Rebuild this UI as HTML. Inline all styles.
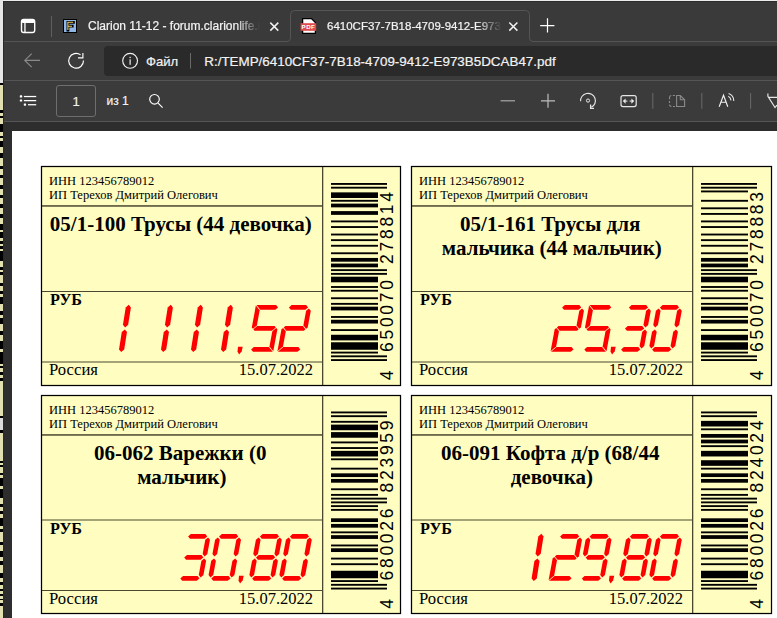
<!DOCTYPE html>
<html><head><meta charset="utf-8"><style>
*{margin:0;padding:0;box-sizing:border-box}
html,body{width:777px;height:618px;overflow:hidden;background:#2d2d2d;position:relative;font-family:"Liberation Sans",sans-serif}
.abs{position:absolute}
.lab{position:absolute;background:#fffec0}
.ov{position:absolute;overflow:visible}
.t{position:absolute;font-family:"Liberation Serif",serif;color:#000;white-space:nowrap}
.inn,.ip{font-size:12.5px;line-height:14px}
.ttl{font-size:21px;font-weight:bold;text-align:center;line-height:24px}
.rub{font-size:16.2px;font-weight:bold;line-height:18px}
.ru{font-size:16.7px;line-height:18px}
.dt{font-size:16.5px;line-height:18px;text-align:right}
.ui{position:absolute;color:#fff;white-space:nowrap;font-family:"Liberation Sans",sans-serif;-webkit-text-stroke:0.2px currentColor}
</style></head><body>
<!-- left strip -->
<div class="abs" style="left:0;top:0;width:777px;height:1px;background:#ececec"></div><div class="abs" style="left:0;top:0;width:3px;height:83px;background:#e6e6e6"></div>
<div class="abs" style="left:0;top:83px;width:3px;height:535px;background:#e2e0b0"></div>
<div style="position:absolute;left:0;top:83px;width:3px;height:2px;background:#000"></div><div style="position:absolute;left:0;top:110px;width:3px;height:3px;background:#000"></div><div style="position:absolute;left:0;top:116px;width:3px;height:2px;background:#000"></div><div style="position:absolute;left:0;top:124px;width:3px;height:8px;background:#000"></div><div style="position:absolute;left:0;top:136px;width:3px;height:2px;background:#000"></div><div style="position:absolute;left:0;top:141px;width:3px;height:6px;background:#000"></div><div style="position:absolute;left:0;top:153px;width:3px;height:5px;background:#000"></div><div style="position:absolute;left:0;top:166px;width:3px;height:3px;background:#000"></div><div style="position:absolute;left:0;top:175px;width:3px;height:3px;background:#000"></div><div style="position:absolute;left:0;top:185px;width:3px;height:4px;background:#000"></div><div style="position:absolute;left:0;top:195px;width:3px;height:3px;background:#000"></div><div style="position:absolute;left:0;top:204px;width:3px;height:4px;background:#000"></div><div style="position:absolute;left:0;top:214px;width:3px;height:4px;background:#000"></div><div style="position:absolute;left:0;top:224px;width:3px;height:6px;background:#000"></div><div style="position:absolute;left:0;top:232px;width:3px;height:6px;background:#000"></div><div style="position:absolute;left:0;top:241px;width:3px;height:3px;background:#000"></div><div style="position:absolute;left:0;top:246px;width:3px;height:3px;background:#000"></div><div style="position:absolute;left:0;top:251px;width:3px;height:10px;background:#000"></div><div style="position:absolute;left:0;top:267px;width:3px;height:3px;background:#000"></div><div style="position:absolute;left:0;top:272px;width:3px;height:3px;background:#000"></div><div style="position:absolute;left:0;top:283px;width:3px;height:3px;background:#000"></div><div style="position:absolute;left:0;top:291px;width:3px;height:3px;background:#000"></div><div style="position:absolute;left:0;top:297px;width:3px;height:7px;background:#000"></div><div style="position:absolute;left:0;top:311px;width:3px;height:4px;background:#000"></div><div style="position:absolute;left:0;top:318px;width:3px;height:6px;background:#000"></div><div style="position:absolute;left:0;top:331px;width:3px;height:4px;background:#000"></div><div style="position:absolute;left:0;top:341px;width:3px;height:8px;background:#000"></div><div style="position:absolute;left:0;top:352px;width:3px;height:12px;background:#000"></div><div style="position:absolute;left:0;top:366px;width:3px;height:2px;background:#000"></div><div style="position:absolute;left:0;top:372px;width:3px;height:3px;background:#000"></div><div style="position:absolute;left:0;top:378px;width:3px;height:3px;background:#000"></div><div style="position:absolute;left:0;top:416px;width:3px;height:2px;background:#000"></div><div style="position:absolute;left:0;top:430px;width:3px;height:3px;background:#000"></div><div style="position:absolute;left:0;top:461px;width:3px;height:2px;background:#000"></div><div style="position:absolute;left:0;top:465px;width:3px;height:2px;background:#000"></div><div style="position:absolute;left:0;top:473px;width:3px;height:2px;background:#000"></div><div style="position:absolute;left:0;top:478px;width:3px;height:8px;background:#000"></div><div style="position:absolute;left:0;top:489px;width:3px;height:9px;background:#000"></div><div style="position:absolute;left:0;top:504px;width:3px;height:3px;background:#000"></div><div style="position:absolute;left:0;top:511px;width:3px;height:3px;background:#000"></div><div style="position:absolute;left:0;top:518px;width:3px;height:8px;background:#000"></div><div style="position:absolute;left:0;top:529px;width:3px;height:3px;background:#000"></div><div style="position:absolute;left:0;top:542px;width:3px;height:3px;background:#000"></div><div style="position:absolute;left:0;top:551px;width:3px;height:6px;background:#000"></div><div style="position:absolute;left:0;top:561px;width:3px;height:4px;background:#000"></div><div style="position:absolute;left:0;top:573px;width:3px;height:5px;background:#000"></div><div style="position:absolute;left:0;top:582px;width:3px;height:3px;background:#000"></div><div style="position:absolute;left:0;top:589px;width:3px;height:2px;background:#000"></div><div style="position:absolute;left:0;top:594px;width:3px;height:2px;background:#000"></div><div style="position:absolute;left:0;top:599px;width:3px;height:1px;background:#000"></div><div style="position:absolute;left:0;top:603px;width:3px;height:3px;background:#000"></div><div style="position:absolute;left:0;top:418px;width:3px;height:12px;background:#dcdcdc"></div>
<!-- tab strip -->
<div class="abs" style="left:3px;top:1px;width:774px;height:41px;background:#3a3a3a;border-left:1px solid #2c2c2c;border-top:1px solid #2c2c2c"></div>
<svg class="abs" style="left:0;top:0" width="777" height="45"><path d="M4 41.5 H287 Q290.5 41.5 290.5 38 V14.5 Q290.5 10.5 294.5 10.5 H525.5 Q529.5 10.5 529.5 14.5 V38 Q529.5 41.5 533 41.5 H777" fill="none" stroke="#555555" stroke-width="1"/></svg>
<!-- toolbar -->
<div class="abs" style="left:3px;top:42px;width:774px;height:38px;background:#3b3b3b"></div>
<div class="abs" style="left:3px;top:80px;width:774px;height:1px;background:#555555"></div>
<div class="abs" style="left:104px;top:46px;width:690px;height:29.6px;background:#2a2a2a;border-radius:4px"></div>
<!-- pdf toolbar -->
<div class="abs" style="left:3px;top:81px;width:774px;height:40px;background:#3b3b3b"></div>
<div class="abs" style="left:3px;top:121px;width:774px;height:1px;background:#555555"></div>

<!-- chrome icons/text -->
<svg class="abs" style="left:0;top:0" width="777" height="130" viewBox="0 0 777 130">
 <!-- tab actions icon -->
 <rect x="21.5" y="19.5" width="13.2" height="13" rx="2.2" fill="none" stroke="#fff" stroke-width="1.4"/>
 <rect x="21.5" y="19.5" width="13.2" height="3.6" rx="1.5" fill="#fff"/>
 <rect x="24.3" y="22.5" width="1.3" height="10" fill="#fff"/>
 <rect x="51" y="16" width="1" height="21" fill="#5f5f5f"/>
 <!-- favicon F -->
 <rect x="63" y="19" width="14" height="14" fill="#000"/>
 <rect x="64" y="20" width="12" height="12" fill="#8fb6e6"/>
 <path d="M67.9 30.2 V22.3 H73.4 M67.9 26.2 H72.2" fill="none" stroke="#000" stroke-width="2.8" stroke-linecap="square"/>
 <path d="M67.9 30 V22.3 H73.2 M67.9 26.2 H72.0" fill="none" stroke="#f5cf55" stroke-width="1.1"/>
 <!-- tab1 close -->
 <path d="M270.3 22.6 L278.3 30.6 M278.3 22.6 L270.3 30.6" stroke="#f0f0f0" stroke-width="1.5"/>
 <!-- pdf icon -->
 <path d="M302.6 18.6 H311.4 L315.4 22.6 V33.4 H302.6 Z" fill="#fff" stroke="#000" stroke-width="1.3"/>
 <rect x="300.6" y="23.2" width="15.6" height="7.6" fill="#e04a4a"/>
 <text x="308.4" y="29.3" font-family="Liberation Sans" font-weight="bold" font-size="6.2" fill="#fff" text-anchor="middle" letter-spacing="0.4">PDF</text>
 <!-- tab2 close -->
 <path d="M509.3 22.5 L517.4 30.6 M517.4 22.5 L509.3 30.6" stroke="#f0f0f0" stroke-width="1.5"/>
 <!-- new tab plus -->
 <path d="M540.2 25.6 H554.4 M547.5 18.2 V32.6" stroke="#fff" stroke-width="1.2"/>
 <!-- back -->
 <path d="M31.7 53.6 L24.8 60.4 L31.7 67.1 M24.8 60.4 H40" fill="none" stroke="#8a8a8a" stroke-width="1.15"/>
 <!-- refresh -->
 <path d="M83.5 60.6 A7.4 7.4 0 1 1 80.6 54.9" fill="none" stroke="#fff" stroke-width="1.15"/>
 <path d="M82.9 53 V57.8 H78" fill="none" stroke="#fff" stroke-width="1.15"/>
 <!-- info -->
 <circle cx="130.1" cy="60.8" r="7.4" fill="none" stroke="#f0f0f0" stroke-width="1.15"/>
 <rect x="129.4" y="56.8" width="1.5" height="1.3" fill="#d0d0d0"/>
 <rect x="129.4" y="59.3" width="1.5" height="5.5" fill="#c8c8c8"/>
 <rect x="190" y="53" width="1" height="15.5" fill="#6a6a6a"/>
 <!-- list icon -->
 <rect x="19.8" y="95.3" width="2.4" height="2.2" rx="0.6" fill="#fff"/>
 <rect x="19.8" y="99.4" width="2.4" height="2.2" rx="0.6" fill="#fff"/>
 <rect x="23.8" y="103.5" width="2.3" height="2.2" rx="0.6" fill="#fff"/>
 <rect x="23.9" y="95.9" width="12.3" height="1.25" fill="#fff"/>
 <rect x="23.9" y="100" width="12.3" height="1.25" fill="#fff"/>
 <rect x="28" y="104.1" width="8.2" height="1.25" fill="#fff"/>
 <!-- page box -->
 <rect x="56.5" y="85.5" width="39" height="31" rx="2.5" fill="none" stroke="#6e6e6e" stroke-width="1"/>
 <!-- search -->
 <circle cx="154.5" cy="99.3" r="4.8" fill="none" stroke="#fff" stroke-width="1.15"/>
 <path d="M158.1 103.2 L162.6 107.6" stroke="#fff" stroke-width="1.15"/>
 <!-- minus / plus -->
 <path d="M500.6 100.8 H515" stroke="#a9a9a9" stroke-width="1.2"/>
 <path d="M541 100.8 H555 M548 93.7 V107.8" stroke="#bdbdbd" stroke-width="1.2"/>
 <!-- rotate -->
 <path d="M580.6 101.2 A7.4 7.4 0 1 1 591.4 107.3" fill="none" stroke="#e6e6e6" stroke-width="1.15"/>
 <path d="M590.6 104.6 V108.3 H594" fill="none" stroke="#e6e6e6" stroke-width="1.3"/>
 <circle cx="588" cy="100.6" r="1.6" fill="none" stroke="#e6e6e6" stroke-width="1"/>
 <!-- fit width -->
 <rect x="621" y="95.6" width="15.2" height="11" rx="2" fill="none" stroke="#e6e6e6" stroke-width="1.2"/>
 <path d="M622.8 101.1 L625.6 98.4 V103.8 Z M634.2 101.1 L631.4 98.4 V103.8 Z" fill="#eeeeee"/>
 <path d="M625 101.1 H627.4 M629.6 101.1 H632" stroke="#cfcfcf" stroke-width="1.3"/>
 <rect x="652.3" y="93" width="1" height="15.8" fill="#6a6a6a"/>
 <!-- two page -->
 <path d="M675 95.5 H672.8 M671.3 95.5 H671.2 A2 2 0 0 0 669.5 97.5 V99.2 M669.5 101 V103 M669.5 104.6 A2 2 0 0 0 671.5 106.5 M673 106.5 H675" fill="none" stroke="#8a8a8a" stroke-width="1.1"/>
 <path d="M676.6 95.5 H680.3 L684.6 99.8 V106.5 H676.6 Z M680.3 95.5 V99.8 H684.6" fill="none" stroke="#8a8a8a" stroke-width="1.1"/>
 <rect x="701.3" y="93" width="1" height="15.8" fill="#6a6a6a"/>
 <!-- read aloud -->
 <path d="M719.2 106.8 L723.5 95.2 L727.8 106.8 M720.6 102.2 H726.4" fill="none" stroke="#f0f0f0" stroke-width="1.15"/>
 <path d="M728.3 96.2 A5 5 0 0 1 731 100.4 M728.6 93.6 A8 8 0 0 1 733.8 101" fill="none" stroke="#e8e8e8" stroke-width="1.1"/>
 <rect x="750.1" y="93" width="1" height="15.8" fill="#6a6a6a"/>
 <!-- draw -->
 <path d="M767.9 93.4 V96.4 L775 107.6 L777 105 M768.5 97.4 H777" fill="none" stroke="#e8e8e8" stroke-width="1.15"/>
</svg>
<div class="ui" style="left:88px;top:19px;font-size:12px;line-height:14px;color:#f4f4f4;width:172px;overflow:hidden;-webkit-mask-image:linear-gradient(90deg,#000 86%,transparent 100%)">Clarion 11-12 - forum.clarionlife.ru</div>
<div class="ui" style="left:327px;top:19px;font-size:11.5px;line-height:14px;color:#f4f4f4;width:175px;overflow:hidden;-webkit-mask-image:linear-gradient(90deg,#000 86%,transparent 100%)">6410CF37-7B18-4709-9412-E973B5DCAB47.pdf</div>
<div class="ui" style="left:146px;top:53.5px;font-size:13.1px;line-height:15px;color:#f2f2f2">Файл</div>
<div class="ui" style="left:204.3px;top:53.5px;font-size:13.4px;line-height:15px;color:#f2f2f2">R:/TEMP/6410CF37-7B18-4709-9412-E973B5DCAB47.pdf</div>
<div class="ui" style="left:56px;top:93.5px;width:40px;text-align:center;font-size:13px;line-height:15px;color:#f2f2f2">1</div>
<div class="ui" style="left:106.5px;top:93.5px;font-size:12px;line-height:15px;color:#f2f2f2">из 1</div>

<div class="abs" style="left:3px;top:1px;width:1px;height:617px;background:#2a2a2a"></div>
<!-- page -->
<div class="abs" style="left:12px;top:131px;width:800px;height:500px;background:#fff"></div>
<div class="lab" style="left:41px;top:166px;width:360px;height:220px"></div>
<svg class="ov" style="left:41px;top:166px" width="360" height="220" viewBox="0 0 360 220">
<rect x="0.5" y="0.5" width="359" height="219" fill="none" stroke="#000" stroke-width="1.25"/>
<rect x="281" y="1" width="1.3" height="218" fill="#4a4830"/>
<rect x="1" y="39.2" width="280" height="1.5" fill="#4a4830"/>
<rect x="1" y="125" width="280" height="1" fill="#4a4830"/>
<rect x="1" y="195.5" width="280" height="1" fill="#4a4830"/>
<g fill="#000"><rect x="290" y="193.126" width="56" height="1.874"/>
<rect x="290" y="189.379" width="56" height="1.874"/>
<rect x="290" y="185.631" width="47" height="1.874"/>
<rect x="290" y="176.263" width="47" height="7.495"/>
<rect x="290" y="168.768" width="47" height="5.621"/>
<rect x="290" y="163.147" width="47" height="1.874"/>
<rect x="290" y="153.779" width="47" height="3.747"/>
<rect x="290" y="150.031" width="47" height="1.874"/>
<rect x="290" y="140.663" width="47" height="3.747"/>
<rect x="290" y="136.915" width="47" height="1.874"/>
<rect x="290" y="131.294" width="47" height="1.874"/>
<rect x="290" y="123.799" width="47" height="1.874"/>
<rect x="290" y="120.052" width="47" height="1.874"/>
<rect x="290" y="110.684" width="47" height="5.621"/>
<rect x="290" y="106.936" width="56" height="1.874"/>
<rect x="290" y="103.189" width="56" height="1.874"/>
<rect x="290" y="97.568" width="47" height="3.747"/>
<rect x="290" y="91.947" width="47" height="3.747"/>
<rect x="290" y="86.325" width="47" height="1.874"/>
<rect x="290" y="78.831" width="47" height="1.874"/>
<rect x="290" y="73.210" width="47" height="1.874"/>
<rect x="290" y="67.588" width="47" height="1.874"/>
<rect x="290" y="60.094" width="47" height="1.874"/>
<rect x="290" y="54.472" width="47" height="1.874"/>
<rect x="290" y="45.104" width="47" height="3.747"/>
<rect x="290" y="37.609" width="47" height="3.747"/>
<rect x="290" y="33.862" width="47" height="1.874"/>
<rect x="290" y="26.367" width="47" height="5.621"/>
<rect x="290" y="20.746" width="56" height="1.874"/>
<rect x="290" y="16.999" width="56" height="1.874"/></g>
<g fill="#000" stroke="#fffec0" stroke-width="0" font-family="Liberation Sans" font-size="17.5" text-anchor="middle"><text transform="translate(352,209.50) rotate(-90)" x="0" y="0">4</text>
<text transform="translate(352,181.16) rotate(-90)" x="0" y="0">6</text>
<text transform="translate(352,168.71) rotate(-90)" x="0" y="0">5</text>
<text transform="translate(352,156.26) rotate(-90)" x="0" y="0">0</text>
<text transform="translate(352,143.81) rotate(-90)" x="0" y="0">0</text>
<text transform="translate(352,131.36) rotate(-90)" x="0" y="0">7</text>
<text transform="translate(352,118.91) rotate(-90)" x="0" y="0">0</text>
<text transform="translate(352,93.09) rotate(-90)" x="0" y="0">2</text>
<text transform="translate(352,80.64) rotate(-90)" x="0" y="0">7</text>
<text transform="translate(352,68.19) rotate(-90)" x="0" y="0">8</text>
<text transform="translate(352,55.74) rotate(-90)" x="0" y="0">8</text>
<text transform="translate(352,43.29) rotate(-90)" x="0" y="0">1</text>
<text transform="translate(352,30.84) rotate(-90)" x="0" y="0">4</text></g>
<g fill="#ff0000"><polygon points="247.87,141.40 250.65,139.05 265.15,139.05 267.07,141.40 264.29,143.75 249.79,143.75"/>
<polygon points="265.10,144.75 267.88,142.40 269.80,144.75 266.71,161.45 265.05,162.85 262.36,159.55"/>
<polygon points="242.71,161.45 244.37,160.05 261.77,160.05 264.46,163.35 262.80,164.75 245.40,164.75"/>
<polygon points="240.46,163.35 242.12,161.95 244.81,165.25 241.98,180.55 236.41,185.25 236.41,185.25"/>
<polygon points="242.38,181.05 257.38,181.05 259.30,183.40 256.52,185.75 236.82,185.75 236.82,185.75"/>
<polygon points="215.45,139.05 215.45,139.05 235.15,139.05 237.07,141.40 234.29,143.75 219.29,143.75"/>
<polygon points="214.86,139.55 214.86,139.55 218.69,144.25 215.86,159.55 211.95,162.85 210.81,161.45"/>
<polygon points="216.27,160.05 233.67,160.05 234.81,161.45 230.90,164.75 213.50,164.75 212.36,163.35"/>
<polygon points="231.31,165.25 235.22,161.95 236.36,163.35 232.31,185.25 232.31,185.25 228.48,180.55"/>
<polygon points="210.10,183.40 212.88,181.05 227.88,181.05 231.72,185.75 231.72,185.75 212.02,185.75"/>
<polygon points="186.72,141.40 189.74,138.80 191.92,141.40 189.14,158.80 186.12,161.40 183.94,158.80"/>
<polygon points="182.78,166.00 185.80,163.40 187.98,166.00 185.20,183.40 182.18,186.00 180.00,183.40"/>
<polygon points="156.72,141.40 159.74,138.80 161.92,141.40 159.14,158.80 156.12,161.40 153.94,158.80"/>
<polygon points="152.78,166.00 155.80,163.40 157.98,166.00 155.20,183.40 152.18,186.00 150.00,183.40"/>
<polygon points="126.72,141.40 129.74,138.80 131.92,141.40 129.14,158.80 126.12,161.40 123.94,158.80"/>
<polygon points="122.78,166.00 125.80,163.40 127.98,166.00 125.20,183.40 122.18,186.00 120.00,183.40"/>
<polygon points="84.72,141.40 87.74,138.80 89.92,141.40 87.14,158.80 84.12,161.40 81.94,158.80"/>
<polygon points="80.78,166.00 83.80,163.40 85.98,166.00 83.20,183.40 80.18,186.00 78.00,183.40"/>
<polygon points="197.00,180.70 201.70,180.70 200.70,185.20 198.10,188.40 196.50,185.40"/></g>
</svg>
<div class="t inn" style="left:49px;top:174px">ИНН 123456789012</div>
<div class="t ip" style="left:49px;top:188px">ИП Терехов Дмитрий Олегович</div>
<div class="t ttl" style="left:40.8px;top:211.7px;width:280px">05/1-100 Трусы (44 девочка)</div>
<div class="t rub" style="left:50px;top:291px">РУБ</div>
<div class="t ru" style="left:49px;top:361.2px">Россия</div>
<div class="t dt" style="left:172px;top:361.2px;width:141px">15.07.2022</div><div class="lab" style="left:411px;top:166px;width:361px;height:220px"></div>
<svg class="ov" style="left:411px;top:166px" width="361" height="220" viewBox="0 0 361 220">
<rect x="0.5" y="0.5" width="360" height="219" fill="none" stroke="#000" stroke-width="1.25"/>
<rect x="281" y="1" width="1.3" height="218" fill="#4a4830"/>
<rect x="1" y="39.2" width="280" height="1.5" fill="#4a4830"/>
<rect x="1" y="125" width="280" height="1" fill="#4a4830"/>
<rect x="1" y="195.5" width="280" height="1" fill="#4a4830"/>
<g fill="#000"><rect x="290" y="193.126" width="56" height="1.874"/>
<rect x="290" y="189.379" width="56" height="1.874"/>
<rect x="290" y="185.631" width="47" height="1.874"/>
<rect x="290" y="176.263" width="47" height="7.495"/>
<rect x="290" y="168.768" width="47" height="5.621"/>
<rect x="290" y="163.147" width="47" height="1.874"/>
<rect x="290" y="153.779" width="47" height="3.747"/>
<rect x="290" y="150.031" width="47" height="1.874"/>
<rect x="290" y="140.663" width="47" height="3.747"/>
<rect x="290" y="136.915" width="47" height="1.874"/>
<rect x="290" y="131.294" width="47" height="1.874"/>
<rect x="290" y="123.799" width="47" height="1.874"/>
<rect x="290" y="120.052" width="47" height="1.874"/>
<rect x="290" y="110.684" width="47" height="5.621"/>
<rect x="290" y="106.936" width="56" height="1.874"/>
<rect x="290" y="103.189" width="56" height="1.874"/>
<rect x="290" y="97.568" width="47" height="3.747"/>
<rect x="290" y="91.947" width="47" height="3.747"/>
<rect x="290" y="86.325" width="47" height="1.874"/>
<rect x="290" y="78.831" width="47" height="1.874"/>
<rect x="290" y="73.210" width="47" height="1.874"/>
<rect x="290" y="67.588" width="47" height="1.874"/>
<rect x="290" y="60.094" width="47" height="1.874"/>
<rect x="290" y="54.472" width="47" height="1.874"/>
<rect x="290" y="46.978" width="47" height="1.874"/>
<rect x="290" y="41.357" width="47" height="1.874"/>
<rect x="290" y="33.862" width="47" height="1.874"/>
<rect x="290" y="24.493" width="47" height="1.874"/>
<rect x="290" y="20.746" width="56" height="1.874"/>
<rect x="290" y="16.999" width="56" height="1.874"/></g>
<g fill="#000" stroke="#fffec0" stroke-width="0" font-family="Liberation Sans" font-size="17.5" text-anchor="middle"><text transform="translate(352,209.50) rotate(-90)" x="0" y="0">4</text>
<text transform="translate(352,181.16) rotate(-90)" x="0" y="0">6</text>
<text transform="translate(352,168.71) rotate(-90)" x="0" y="0">5</text>
<text transform="translate(352,156.26) rotate(-90)" x="0" y="0">0</text>
<text transform="translate(352,143.81) rotate(-90)" x="0" y="0">0</text>
<text transform="translate(352,131.36) rotate(-90)" x="0" y="0">7</text>
<text transform="translate(352,118.91) rotate(-90)" x="0" y="0">0</text>
<text transform="translate(352,93.09) rotate(-90)" x="0" y="0">2</text>
<text transform="translate(352,80.64) rotate(-90)" x="0" y="0">7</text>
<text transform="translate(352,68.19) rotate(-90)" x="0" y="0">8</text>
<text transform="translate(352,55.74) rotate(-90)" x="0" y="0">8</text>
<text transform="translate(352,43.29) rotate(-90)" x="0" y="0">8</text>
<text transform="translate(352,30.84) rotate(-90)" x="0" y="0">3</text></g>
<g fill="#ff0000"><polygon points="248.87,141.40 251.65,139.05 266.15,139.05 268.07,141.40 265.29,143.75 250.79,143.75"/>
<polygon points="266.10,144.75 268.88,142.40 270.80,144.75 268.15,159.05 265.37,161.40 263.45,159.05"/>
<polygon points="262.22,165.75 265.00,163.40 266.92,165.75 264.27,180.05 261.49,182.40 259.57,180.05"/>
<polygon points="241.10,183.40 243.88,181.05 258.38,181.05 260.30,183.40 257.52,185.75 243.02,185.75"/>
<polygon points="241.02,165.75 243.80,163.40 245.72,165.75 243.07,180.05 240.28,182.40 238.37,180.05"/>
<polygon points="244.90,144.75 247.69,142.40 249.60,144.75 246.95,159.05 244.17,161.40 242.25,159.05"/>
<polygon points="217.87,141.40 220.65,139.05 235.15,139.05 237.07,141.40 234.29,143.75 219.79,143.75"/>
<polygon points="235.10,144.75 237.88,142.40 239.80,144.75 237.15,159.05 234.37,161.40 232.45,159.05"/>
<polygon points="213.98,162.40 216.77,160.05 231.27,160.05 233.18,162.40 230.40,164.75 215.90,164.75"/>
<polygon points="231.22,165.75 234.00,163.40 235.92,165.75 233.27,180.05 230.48,182.40 228.57,180.05"/>
<polygon points="210.10,183.40 212.88,181.05 227.38,181.05 229.30,183.40 226.52,185.75 212.02,185.75"/>
<polygon points="178.65,139.05 178.65,139.05 198.35,139.05 200.27,141.40 197.49,143.75 182.49,143.75"/>
<polygon points="178.06,139.55 178.06,139.55 181.89,144.25 179.06,159.55 175.15,162.85 174.01,161.45"/>
<polygon points="179.47,160.05 196.87,160.05 198.01,161.45 194.10,164.75 176.70,164.75 175.56,163.35"/>
<polygon points="194.51,165.25 198.42,161.95 199.56,163.35 195.51,185.25 195.51,185.25 191.68,180.55"/>
<polygon points="173.30,183.40 176.08,181.05 191.08,181.05 194.92,185.75 194.92,185.75 175.22,185.75"/>
<polygon points="151.07,141.40 153.85,139.05 168.35,139.05 170.27,141.40 167.49,143.75 152.99,143.75"/>
<polygon points="168.30,144.75 171.08,142.40 173.00,144.75 169.91,161.45 168.25,162.85 165.56,159.55"/>
<polygon points="145.91,161.45 147.57,160.05 164.97,160.05 167.66,163.35 166.00,164.75 148.60,164.75"/>
<polygon points="143.66,163.35 145.32,161.95 148.01,165.25 145.18,180.55 139.61,185.25 139.61,185.25"/>
<polygon points="145.58,181.05 160.58,181.05 162.50,183.40 159.72,185.75 140.02,185.75 140.02,185.75"/>
<polygon points="200.00,180.70 204.70,180.70 203.70,185.20 201.10,188.40 199.50,185.40"/></g>
</svg>
<div class="t inn" style="left:419px;top:174px">ИНН 123456789012</div>
<div class="t ip" style="left:419px;top:188px">ИП Терехов Дмитрий Олегович</div>
<div class="t ttl" style="left:411.8px;top:211.7px;width:280px"><span style="position:relative;left:-1.6px">05/1-161 Трусы для</span><br>мальчика (44 мальчик)</div>
<div class="t rub" style="left:420px;top:291px">РУБ</div>
<div class="t ru" style="left:419px;top:361.2px">Россия</div>
<div class="t dt" style="left:542px;top:361.2px;width:141px">15.07.2022</div><div class="lab" style="left:41px;top:395px;width:360px;height:219px"></div>
<svg class="ov" style="left:41px;top:395px" width="360" height="219" viewBox="0 0 360 219">
<rect x="0.5" y="0.5" width="359" height="218" fill="none" stroke="#000" stroke-width="1.25"/>
<rect x="281" y="1" width="1.3" height="217" fill="#4a4830"/>
<rect x="1" y="39.2" width="280" height="1.5" fill="#4a4830"/>
<rect x="1" y="124.5" width="280" height="1" fill="#4a4830"/>
<rect x="1" y="195" width="280" height="1" fill="#4a4830"/>
<g fill="#000"><rect x="290" y="192.626" width="56" height="1.874"/>
<rect x="290" y="188.879" width="56" height="1.874"/>
<rect x="290" y="185.131" width="47" height="1.874"/>
<rect x="290" y="175.763" width="47" height="7.495"/>
<rect x="290" y="168.268" width="47" height="1.874"/>
<rect x="290" y="162.647" width="47" height="1.874"/>
<rect x="290" y="153.279" width="47" height="3.747"/>
<rect x="290" y="149.531" width="47" height="1.874"/>
<rect x="290" y="140.163" width="47" height="3.747"/>
<rect x="290" y="136.415" width="47" height="1.874"/>
<rect x="290" y="128.921" width="47" height="3.747"/>
<rect x="290" y="123.299" width="47" height="3.747"/>
<rect x="290" y="113.931" width="47" height="1.874"/>
<rect x="290" y="110.184" width="47" height="1.874"/>
<rect x="290" y="106.436" width="56" height="1.874"/>
<rect x="290" y="102.689" width="56" height="1.874"/>
<rect x="290" y="98.941" width="47" height="1.874"/>
<rect x="290" y="93.320" width="47" height="1.874"/>
<rect x="290" y="83.952" width="47" height="3.747"/>
<rect x="290" y="78.331" width="47" height="3.747"/>
<rect x="290" y="72.710" width="47" height="1.874"/>
<rect x="290" y="63.341" width="47" height="1.874"/>
<rect x="290" y="55.846" width="47" height="5.621"/>
<rect x="290" y="52.099" width="47" height="1.874"/>
<rect x="290" y="46.478" width="47" height="1.874"/>
<rect x="290" y="37.109" width="47" height="5.621"/>
<rect x="290" y="29.614" width="47" height="5.621"/>
<rect x="290" y="25.867" width="47" height="1.874"/>
<rect x="290" y="20.246" width="56" height="1.874"/>
<rect x="290" y="16.499" width="56" height="1.874"/></g>
<g fill="#000" stroke="#fffec0" stroke-width="0" font-family="Liberation Sans" font-size="17.5" text-anchor="middle"><text transform="translate(352,209.00) rotate(-90)" x="0" y="0">4</text>
<text transform="translate(352,180.66) rotate(-90)" x="0" y="0">6</text>
<text transform="translate(352,168.21) rotate(-90)" x="0" y="0">8</text>
<text transform="translate(352,155.76) rotate(-90)" x="0" y="0">0</text>
<text transform="translate(352,143.31) rotate(-90)" x="0" y="0">0</text>
<text transform="translate(352,130.86) rotate(-90)" x="0" y="0">2</text>
<text transform="translate(352,118.41) rotate(-90)" x="0" y="0">6</text>
<text transform="translate(352,92.59) rotate(-90)" x="0" y="0">8</text>
<text transform="translate(352,80.14) rotate(-90)" x="0" y="0">2</text>
<text transform="translate(352,67.69) rotate(-90)" x="0" y="0">3</text>
<text transform="translate(352,55.24) rotate(-90)" x="0" y="0">9</text>
<text transform="translate(352,42.79) rotate(-90)" x="0" y="0">5</text>
<text transform="translate(352,30.34) rotate(-90)" x="0" y="0">9</text></g>
<g fill="#ff0000"><polygon points="248.87,141.40 251.65,139.05 266.15,139.05 268.07,141.40 265.29,143.75 250.79,143.75"/>
<polygon points="266.10,144.75 268.88,142.40 270.80,144.75 268.15,159.05 265.37,161.40 263.45,159.05"/>
<polygon points="262.22,165.75 265.00,163.40 266.92,165.75 264.27,180.05 261.49,182.40 259.57,180.05"/>
<polygon points="241.10,183.40 243.88,181.05 258.38,181.05 260.30,183.40 257.52,185.75 243.02,185.75"/>
<polygon points="241.02,165.75 243.80,163.40 245.72,165.75 243.07,180.05 240.28,182.40 238.37,180.05"/>
<polygon points="244.90,144.75 247.69,142.40 249.60,144.75 246.95,159.05 244.17,161.40 242.25,159.05"/>
<polygon points="218.87,141.40 221.65,139.05 236.15,139.05 238.07,141.40 235.29,143.75 220.79,143.75"/>
<polygon points="236.10,144.75 238.88,142.40 240.80,144.75 238.15,159.05 235.37,161.40 233.45,159.05"/>
<polygon points="232.22,165.75 235.00,163.40 236.92,165.75 234.27,180.05 231.48,182.40 229.57,180.05"/>
<polygon points="211.10,183.40 213.88,181.05 228.38,181.05 230.30,183.40 227.52,185.75 213.02,185.75"/>
<polygon points="211.02,165.75 213.80,163.40 215.72,165.75 213.07,180.05 210.28,182.40 208.37,180.05"/>
<polygon points="214.90,144.75 217.69,142.40 219.60,144.75 216.95,159.05 214.17,161.40 212.25,159.05"/>
<polygon points="214.98,162.40 217.77,160.05 232.27,160.05 234.18,162.40 231.40,164.75 216.90,164.75"/>
<polygon points="178.07,141.40 180.85,139.05 195.35,139.05 197.27,141.40 194.49,143.75 179.99,143.75"/>
<polygon points="195.30,144.75 198.08,142.40 200.00,144.75 197.35,159.05 194.57,161.40 192.65,159.05"/>
<polygon points="191.42,165.75 194.20,163.40 196.12,165.75 193.47,180.05 190.68,182.40 188.77,180.05"/>
<polygon points="170.30,183.40 173.08,181.05 187.58,181.05 189.50,183.40 186.72,185.75 172.22,185.75"/>
<polygon points="170.22,165.75 173.00,163.40 174.92,165.75 172.27,180.05 169.48,182.40 167.57,180.05"/>
<polygon points="174.10,144.75 176.88,142.40 178.80,144.75 176.15,159.05 173.37,161.40 171.45,159.05"/>
<polygon points="147.07,141.40 149.85,139.05 164.35,139.05 166.27,141.40 163.49,143.75 148.99,143.75"/>
<polygon points="164.30,144.75 167.08,142.40 169.00,144.75 166.35,159.05 163.57,161.40 161.65,159.05"/>
<polygon points="143.18,162.40 145.97,160.05 160.47,160.05 162.38,162.40 159.60,164.75 145.10,164.75"/>
<polygon points="160.42,165.75 163.20,163.40 165.12,165.75 162.47,180.05 159.68,182.40 157.77,180.05"/>
<polygon points="139.30,183.40 142.08,181.05 156.58,181.05 158.50,183.40 155.72,185.75 141.22,185.75"/>
<polygon points="198.00,180.70 202.70,180.70 201.70,185.20 199.10,188.40 197.50,185.40"/></g>
</svg>
<div class="t inn" style="left:49px;top:403px">ИНН 123456789012</div>
<div class="t ip" style="left:49px;top:417px">ИП Терехов Дмитрий Олегович</div>
<div class="t ttl" style="left:41.8px;top:440.7px;width:280px"><span style="position:relative;left:-1.6px">06-062 Варежки (0</span><br>мальчик)</div>
<div class="t rub" style="left:50px;top:519.5px">РУБ</div>
<div class="t ru" style="left:49px;top:589.7px">Россия</div>
<div class="t dt" style="left:172px;top:589.7px;width:141px">15.07.2022</div><div class="lab" style="left:411px;top:395px;width:361px;height:219px"></div>
<svg class="ov" style="left:411px;top:395px" width="361" height="219" viewBox="0 0 361 219">
<rect x="0.5" y="0.5" width="360" height="218" fill="none" stroke="#000" stroke-width="1.25"/>
<rect x="281" y="1" width="1.3" height="217" fill="#4a4830"/>
<rect x="1" y="39.2" width="280" height="1.5" fill="#4a4830"/>
<rect x="1" y="124.5" width="280" height="1" fill="#4a4830"/>
<rect x="1" y="195" width="280" height="1" fill="#4a4830"/>
<g fill="#000"><rect x="290" y="192.626" width="56" height="1.874"/>
<rect x="290" y="188.879" width="56" height="1.874"/>
<rect x="290" y="185.131" width="47" height="1.874"/>
<rect x="290" y="175.763" width="47" height="7.495"/>
<rect x="290" y="168.268" width="47" height="1.874"/>
<rect x="290" y="162.647" width="47" height="1.874"/>
<rect x="290" y="153.279" width="47" height="3.747"/>
<rect x="290" y="149.531" width="47" height="1.874"/>
<rect x="290" y="140.163" width="47" height="3.747"/>
<rect x="290" y="136.415" width="47" height="1.874"/>
<rect x="290" y="128.921" width="47" height="3.747"/>
<rect x="290" y="123.299" width="47" height="3.747"/>
<rect x="290" y="113.931" width="47" height="1.874"/>
<rect x="290" y="110.184" width="47" height="1.874"/>
<rect x="290" y="106.436" width="56" height="1.874"/>
<rect x="290" y="102.689" width="56" height="1.874"/>
<rect x="290" y="98.941" width="47" height="1.874"/>
<rect x="290" y="93.320" width="47" height="1.874"/>
<rect x="290" y="83.952" width="47" height="3.747"/>
<rect x="290" y="78.331" width="47" height="3.747"/>
<rect x="290" y="72.710" width="47" height="1.874"/>
<rect x="290" y="65.215" width="47" height="5.621"/>
<rect x="290" y="55.846" width="47" height="5.621"/>
<rect x="290" y="50.225" width="47" height="1.874"/>
<rect x="290" y="44.604" width="47" height="3.747"/>
<rect x="290" y="38.983" width="47" height="3.747"/>
<rect x="290" y="33.362" width="47" height="1.874"/>
<rect x="290" y="25.867" width="47" height="5.621"/>
<rect x="290" y="20.246" width="56" height="1.874"/>
<rect x="290" y="16.499" width="56" height="1.874"/></g>
<g fill="#000" stroke="#fffec0" stroke-width="0" font-family="Liberation Sans" font-size="17.5" text-anchor="middle"><text transform="translate(352,209.00) rotate(-90)" x="0" y="0">4</text>
<text transform="translate(352,180.66) rotate(-90)" x="0" y="0">6</text>
<text transform="translate(352,168.21) rotate(-90)" x="0" y="0">8</text>
<text transform="translate(352,155.76) rotate(-90)" x="0" y="0">0</text>
<text transform="translate(352,143.31) rotate(-90)" x="0" y="0">0</text>
<text transform="translate(352,130.86) rotate(-90)" x="0" y="0">2</text>
<text transform="translate(352,118.41) rotate(-90)" x="0" y="0">6</text>
<text transform="translate(352,92.59) rotate(-90)" x="0" y="0">8</text>
<text transform="translate(352,80.14) rotate(-90)" x="0" y="0">2</text>
<text transform="translate(352,67.69) rotate(-90)" x="0" y="0">4</text>
<text transform="translate(352,55.24) rotate(-90)" x="0" y="0">0</text>
<text transform="translate(352,42.79) rotate(-90)" x="0" y="0">2</text>
<text transform="translate(352,30.34) rotate(-90)" x="0" y="0">4</text></g>
<g fill="#ff0000"><polygon points="248.87,141.40 251.65,139.05 266.15,139.05 268.07,141.40 265.29,143.75 250.79,143.75"/>
<polygon points="266.10,144.75 268.88,142.40 270.80,144.75 268.15,159.05 265.37,161.40 263.45,159.05"/>
<polygon points="262.22,165.75 265.00,163.40 266.92,165.75 264.27,180.05 261.49,182.40 259.57,180.05"/>
<polygon points="241.10,183.40 243.88,181.05 258.38,181.05 260.30,183.40 257.52,185.75 243.02,185.75"/>
<polygon points="241.02,165.75 243.80,163.40 245.72,165.75 243.07,180.05 240.28,182.40 238.37,180.05"/>
<polygon points="244.90,144.75 247.69,142.40 249.60,144.75 246.95,159.05 244.17,161.40 242.25,159.05"/>
<polygon points="218.87,141.40 221.65,139.05 236.15,139.05 238.07,141.40 235.29,143.75 220.79,143.75"/>
<polygon points="236.10,144.75 238.88,142.40 240.80,144.75 238.15,159.05 235.37,161.40 233.45,159.05"/>
<polygon points="232.22,165.75 235.00,163.40 236.92,165.75 234.27,180.05 231.48,182.40 229.57,180.05"/>
<polygon points="211.10,183.40 213.88,181.05 228.38,181.05 230.30,183.40 227.52,185.75 213.02,185.75"/>
<polygon points="211.02,165.75 213.80,163.40 215.72,165.75 213.07,180.05 210.28,182.40 208.37,180.05"/>
<polygon points="214.90,144.75 217.69,142.40 219.60,144.75 216.95,159.05 214.17,161.40 212.25,159.05"/>
<polygon points="214.98,162.40 217.77,160.05 232.27,160.05 234.18,162.40 231.40,164.75 216.90,164.75"/>
<polygon points="178.57,141.40 181.35,139.05 195.85,139.05 197.77,141.40 194.99,143.75 180.49,143.75"/>
<polygon points="195.80,144.75 198.58,142.40 200.50,144.75 197.85,159.05 195.07,161.40 193.15,159.05"/>
<polygon points="191.92,165.75 194.70,163.40 196.62,165.75 193.97,180.05 191.18,182.40 189.27,180.05"/>
<polygon points="170.80,183.40 173.58,181.05 188.08,181.05 190.00,183.40 187.22,185.75 172.72,185.75"/>
<polygon points="174.60,144.75 177.38,142.40 179.30,144.75 176.65,159.05 173.87,161.40 171.95,159.05"/>
<polygon points="174.68,162.40 177.47,160.05 191.97,160.05 193.88,162.40 191.10,164.75 176.60,164.75"/>
<polygon points="149.07,141.40 151.85,139.05 166.35,139.05 168.27,141.40 165.49,143.75 150.99,143.75"/>
<polygon points="166.30,144.75 169.08,142.40 171.00,144.75 167.91,161.45 166.25,162.85 163.56,159.55"/>
<polygon points="143.91,161.45 145.57,160.05 162.97,160.05 165.66,163.35 164.00,164.75 146.60,164.75"/>
<polygon points="141.66,163.35 143.32,161.95 146.01,165.25 143.18,180.55 137.61,185.25 137.61,185.25"/>
<polygon points="143.58,181.05 158.58,181.05 160.50,183.40 157.72,185.75 138.02,185.75 138.02,185.75"/>
<polygon points="127.32,141.40 130.34,138.80 132.52,141.40 129.74,158.80 126.72,161.40 124.54,158.80"/>
<polygon points="123.38,166.00 126.40,163.40 128.58,166.00 125.80,183.40 122.78,186.00 120.60,183.40"/>
<polygon points="198.50,180.70 203.20,180.70 202.20,185.20 199.60,188.40 198.00,185.40"/></g>
</svg>
<div class="t inn" style="left:419px;top:403px">ИНН 123456789012</div>
<div class="t ip" style="left:419px;top:417px">ИП Терехов Дмитрий Олегович</div>
<div class="t ttl" style="left:411.8px;top:440.7px;width:280px"><span style="position:relative;left:-1.6px">06-091 Кофта д/р (68/44</span><br>девочка)</div>
<div class="t rub" style="left:420px;top:519.5px">РУБ</div>
<div class="t ru" style="left:419px;top:589.7px">Россия</div>
<div class="t dt" style="left:542px;top:589.7px;width:141px">15.07.2022</div>
</body></html>
